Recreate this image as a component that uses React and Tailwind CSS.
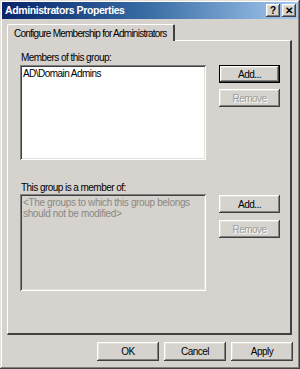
import React from "react";

const raised =
  "shadow-[inset_-1px_-1px_#404040,inset_1px_1px_#ffffff,inset_-2px_-2px_#808080,inset_2px_2px_#e4e1dc]";
const sunken =
  "shadow-[inset_1px_1px_#808080,inset_-1px_-1px_#ffffff,inset_2px_2px_#404040,inset_-2px_-2px_#e4e1dc]";

const Button = ({ label, disabled, isDefault, className = "" }) => (
  <div
    className={`flex items-center justify-center ${
      isDefault ? "border border-black" : ""
    } ${className}`}
  >
    <div
      className={`w-full h-full flex items-center justify-center bg-[#d6d3ce] ${raised} ${
        disabled ? "text-[#a09d98] [text-shadow:1px_1px_0_#ffffff]" : "text-black"
      }`}
    >
      {label}
    </div>
  </div>
);

const TitleButton = ({ children }) => (
  <div
    className={`w-[14px] h-[13px] bg-[#d6d3ce] ${raised} flex items-center justify-center text-[10px] font-bold text-black leading-none tracking-normal`}
  >
    {children}
  </div>
);

export default function App() {
  return (
    <div className="w-[300px] h-[369px] bg-[#d6d3ce] p-[2px] shadow-[inset_-1px_-1px_#404040,inset_1px_1px_#e4e1dc,inset_-2px_-2px_#808080,inset_2px_2px_#ffffff] font-['Liberation_Sans',Arial,sans-serif] text-[10px] tracking-[-0.55px] text-black overflow-hidden">
      {/* title bar */}
      <div className="h-[17px] flex items-center justify-between pl-[3px] pr-[2px] bg-gradient-to-r from-[#0a246a] via-[#3a6ea5] to-[#a6caf0]">
        <span className="text-white font-bold text-[10.5px] tracking-[-0.4px]">
          Administrators Properties
        </span>
        <div className="flex gap-[2px]">
          <TitleButton>?</TitleButton>
          <TitleButton>✕</TitleButton>
        </div>
      </div>

      {/* tab */}
      <div className="mt-[5px] ml-[5px] flex">
        <div className="relative z-10 -mb-[1px] h-[17px] w-[168px] bg-[#d6d3ce] border-t border-l border-white border-r-2 border-r-[#404040] rounded-t-[2px] flex items-center pl-[6px] whitespace-nowrap tracking-[-0.75px]">
          Configure Membership for Administrators
        </div>
      </div>

      {/* tab panel */}
      <div className="ml-[5px] w-[285px] h-[295px] border-t border-l border-white border-r-2 border-b-2 border-r-[#404040] border-b-[#404040] pl-[12px] pt-[10px]">
        <div className="h-[13px] leading-[13px] pl-[1px]">Members of this group:</div>
        <div className="mt-[1px] flex">
          <div className={`w-[186px] h-[95px] bg-white ${sunken} px-[3px] pt-[3px] leading-[12px]`}>
            AD\Domain Admins
          </div>
          <div className="ml-[13px] flex flex-col gap-[6px]">
            <Button label="Add..." isDefault className="w-[61px] h-[18px]" />
            <Button label="Remove" disabled className="w-[61px] h-[18px]" />
          </div>
        </div>

        <div className="mt-[21px] h-[13px] leading-[13px] pl-[1px]">This group is a member of:</div>
        <div className="flex">
          <div
            className={`w-[186px] h-[97px] bg-[#d6d3ce] ${sunken} pl-[3px] pt-[3px] text-[#8a8783] leading-[11px] whitespace-nowrap tracking-[-0.35px]`}
          >
            &lt;The groups to which this group belongs
            <br />
            should not be modified&gt;
          </div>
          <div className="ml-[13px] mt-[1px] flex flex-col gap-[7px]">
            <Button label="Add..." className="w-[61px] h-[18px]" />
            <Button label="Remove" disabled className="w-[61px] h-[18px]" />
          </div>
        </div>
      </div>

      {/* dialog buttons */}
      <div className="mt-[7px] pr-[5px] flex justify-end gap-[5px]">
        <Button label="OK" className="w-[62px] h-[19px]" />
        <Button label="Cancel" className="w-[62px] h-[19px]" />
        <Button label="Apply" className="w-[62px] h-[19px]" />
      </div>
    </div>
  );
}
